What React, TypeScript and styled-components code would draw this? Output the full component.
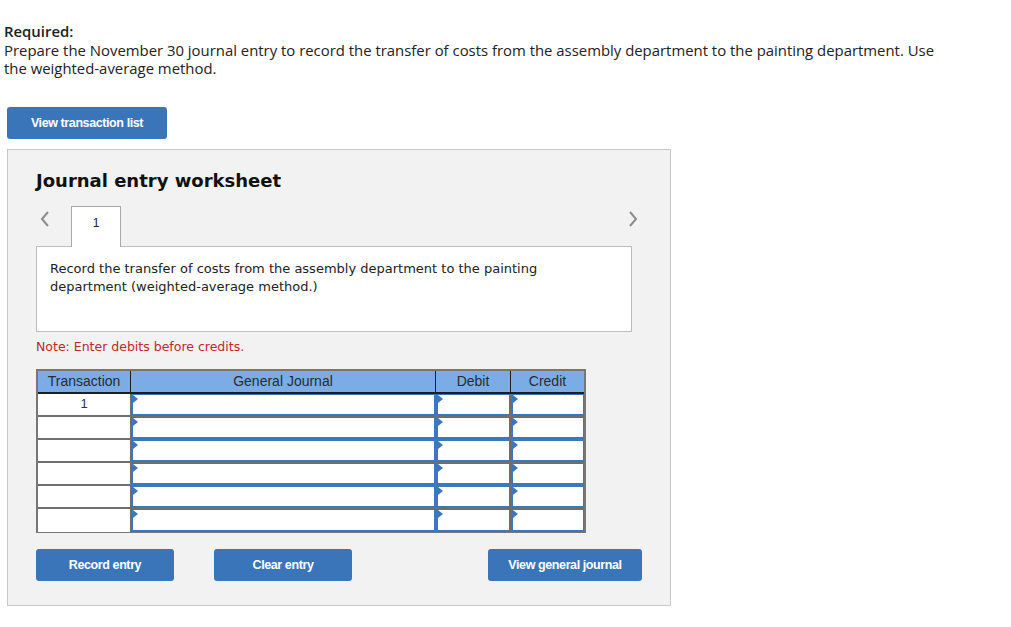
import React from "react";
import styled, { createGlobalStyle } from "styled-components";

const GlobalStyle = createGlobalStyle`
  body {
    margin: 0;
    background: #ffffff;
    font-family: "Liberation Sans", Arial, sans-serif;
  }
`;

const Page = styled.div`
  width: 1011px;
  min-height: 627px;
  padding: 22px 0 0 4px;
  box-sizing: border-box;
`;

const Required = styled.div`
  font-family: "Open Sans", sans-serif;
  font-size: 14.9px;
  line-height: 18.5px;
  color: #222;
  width: 945px;
`;

const RequiredLabel = styled.div`
  font-weight: 600;
`;

const BlueButton = styled.button<{ $width: number }>`
  width: ${(p) => p.$width}px;
  height: 32px;
  border: none;
  border-radius: 3px;
  background: #3a75b9;
  color: #fff;
  font-family: "Liberation Sans", Arial, sans-serif;
  font-weight: bold;
  font-size: 12.5px;
  letter-spacing: -0.4px;
  cursor: pointer;
  padding: 0;
`;

const TopButtonRow = styled.div`
  margin: 29px 0 0 3px;
`;

const Panel = styled.div`
  margin: 10px 0 0 3px;
  width: 664px;
  height: 457px;
  box-sizing: border-box;
  border: 1px solid #c8c8c8;
  background: #f2f2f2;
  padding: 20px 0 0 28px;
`;

const Title = styled.h2`
  margin: 0;
  font-family: "DejaVu Sans", Verdana, sans-serif;
  font-weight: bold;
  font-size: 18px;
  line-height: 22px;
  color: #111;
`;

const TabRow = styled.div`
  display: flex;
  align-items: flex-end;
  width: 596px;
  height: 40px;
  margin-top: 14px;
`;

const ArrowBox = styled.span`
  display: flex;
  align-items: center;
  height: 28px;
  margin-bottom: 13px;
`;

const TabLeft = styled(ArrowBox)`
  width: 35px;
  padding-left: 3px;
  box-sizing: border-box;
`;

const TabRight = styled(ArrowBox)`
  margin-right: -7px;
`;

const Tab = styled.div`
  width: 50px;
  height: 41px;
  margin: 0 0 -1px 0;
  box-sizing: border-box;
  border: 1px solid #a9a9a9;
  border-bottom: none;
  background: #fff;
  display: flex;
  justify-content: center;
  padding-top: 9px;
  font-size: 12px;
  color: #222;
  position: relative;
  z-index: 1;
`;

const TabSpacer = styled.div`
  flex: 1;
`;

const Prompt = styled.div`
  width: 596px;
  height: 86px;
  box-sizing: border-box;
  border: 1px solid #bdbdbd;
  background: #fff;
  padding: 13px 13px;
  font-family: "DejaVu Sans", Verdana, sans-serif;
  font-size: 13px;
  line-height: 18px;
  color: #222;
`;

const Note = styled.div`
  margin-top: 7px;
  font-family: "DejaVu Sans", Verdana, sans-serif;
  font-size: 12.5px;
  color: #c1272d;
`;

const Grid = styled.div`
  margin-top: 15px;
  width: 550px;
  box-sizing: border-box;
  display: grid;
  grid-template-columns: 93px 305px 75px 73px;
  border: 2px solid #777;
  border-bottom-width: 1px;
`;

const HeadCell = styled.div<{ $last?: boolean }>`
  height: 23px;
  box-sizing: border-box;
  background: #7aade5;
  border-right: ${(p) => (p.$last ? "none" : "1px solid #1e1e1e")};
  border-bottom: 2px solid #1e1e1e;
  display: flex;
  align-items: center;
  justify-content: center;
  font-size: 14px;
  color: #2b2b2b;
`;

const BodyCell = styled.div<{ $lastRow?: boolean }>`
  height: 23px;
  box-sizing: border-box;
  background: #fff;
  border-right: 1px solid #6f6f6f;
  border-bottom: ${(p) => (p.$lastRow ? "none" : "2px solid #6f6f6f")};
  display: flex;
  justify-content: center;
  font-size: 13px;
  color: #333;
  padding-top: 2px;
`;

const EntryCell = styled.div<{ $last?: boolean; $lastRow?: boolean }>`
  height: 23px;
  box-sizing: border-box;
  background: #6f6f6f;
  border-right: ${(p) => (p.$last ? "none" : "1px solid #6f6f6f")};
  border-bottom: ${(p) => (p.$lastRow ? "none" : "1px solid #6f6f6f")};
  display: flex;
`;

const Field = styled.div`
  flex: 1;
  position: relative;
  background: #fff;
  border: 2px solid #3d76bd;
  border-top-width: 1px;
  border-right-width: 1px;
`;

const Marker = styled.span`
  position: absolute;
  left: 0;
  top: 0;
  width: 0;
  height: 0;
  border-top: 4px solid transparent;
  border-bottom: 4px solid transparent;
  border-left: 5px solid #3d76bd;
`;

const ActionRow = styled.div`
  display: flex;
  margin-top: 16px;
  width: 606px;
`;

const ActionGap = styled.div<{ $w?: number }>`
  ${(p) => (p.$w ? `width: ${p.$w}px;` : "flex: 1;")}
`;

const Chevron = ({ dir }: { dir: "left" | "right" }) => (
  <svg width="12" height="18" viewBox="0 0 12 18">
    <polyline
      points={dir === "left" ? "9,2 3,9 9,16" : "3,2 9,9 3,16"}
      fill="none"
      stroke="#8c8c8c"
      strokeWidth="2"
    />
  </svg>
);

const rows = ["1", "", "", "", "", ""];

export default function App() {
  return (
    <Page>
      <GlobalStyle />
      <Required>
        <RequiredLabel>Required:</RequiredLabel>
        Prepare the November 30 journal entry to record the transfer of costs from the assembly department to the
        painting department. Use the weighted-average method.
      </Required>

      <TopButtonRow>
        <BlueButton $width={160}>View transaction list</BlueButton>
      </TopButtonRow>

      <Panel>
        <Title>Journal entry worksheet</Title>

        <TabRow>
          <TabLeft>
            <Chevron dir="left" />
          </TabLeft>
          <Tab>1</Tab>
          <TabSpacer />
          <TabRight>
            <Chevron dir="right" />
          </TabRight>
        </TabRow>

        <Prompt>
          Record the transfer of costs from the assembly department to the painting
          <br />
          department (weighted-average method.)
        </Prompt>

        <Note>Note: Enter debits before credits.</Note>

        <Grid>
          <HeadCell>Transaction</HeadCell>
          <HeadCell>General Journal</HeadCell>
          <HeadCell>Debit</HeadCell>
          <HeadCell $last>Credit</HeadCell>
          {rows.map((t, i) => {
            const lastRow = i === rows.length - 1;
            return (
              <React.Fragment key={i}>
                <BodyCell $lastRow={lastRow}>{t}</BodyCell>
                <EntryCell $lastRow={lastRow}>
                  <Field>
                    <Marker />
                  </Field>
                </EntryCell>
                <EntryCell $lastRow={lastRow}>
                  <Field>
                    <Marker />
                  </Field>
                </EntryCell>
                <EntryCell $last $lastRow={lastRow}>
                  <Field>
                    <Marker />
                  </Field>
                </EntryCell>
              </React.Fragment>
            );
          })}
        </Grid>

        <ActionRow>
          <BlueButton $width={138}>Record entry</BlueButton>
          <ActionGap $w={40} />
          <BlueButton $width={138}>Clear entry</BlueButton>
          <ActionGap />
          <BlueButton $width={154}>View general journal</BlueButton>
        </ActionRow>
      </Panel>
    </Page>
  );
}
